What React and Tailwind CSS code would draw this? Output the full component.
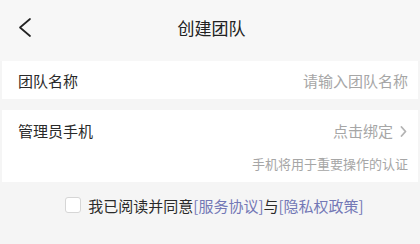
const App = () => {
    return (
        <div className="w-[420px] h-[244px] bg-[#f5f5f5] overflow-hidden" style={{ fontFamily: '"Noto Sans CJK SC", "Noto Sans", sans-serif' }}>
            <div className="relative h-[61px] flex items-center justify-center bg-[#f7f7f7] pb-[6px]">
                <svg className="absolute left-[17px] top-[17px]" width="16" height="21" viewBox="0 0 16 21" fill="none">
                    <polyline points="13,2 3,10.5 13,19" stroke="#222" strokeWidth="1.7" strokeLinecap="round" strokeLinejoin="round" />
                </svg>
                <h1 className="text-[17px] text-[#222] leading-none ml-[3px]">创建团队</h1>
            </div>

            <div className="mx-[2px] h-[38px] bg-white flex items-center justify-between pl-4 pr-[10px] pt-[2px]">
                <span className="text-[15px] text-[#2a2a2a]">团队名称</span>
                <span className="text-[15px] text-[#a6a6a6]">请输入团队名称</span>
            </div>

            <div className="mx-[2px] mt-[11px] h-[72px] bg-white pl-4 pr-[10px] flex flex-col">
                <div className="h-[42px] flex items-center justify-between">
                    <span className="text-[15px] text-[#2a2a2a]">管理员手机</span>
                    <span className="flex items-center text-[15px] text-[#a6a6a6]">
                        点击绑定
                        <svg className="ml-[7px] mr-[1px]" width="7" height="11" viewBox="0 0 7 11" fill="none">
                            <polyline points="1.5,1 5.5,5.5 1.5,10" stroke="#b3b3b3" strokeWidth="1.8" strokeLinecap="round" strokeLinejoin="round" />
                        </svg>
                    </span>
                </div>
                <div className="text-right text-[13px] text-[#a6a6a6] leading-none mt-[5px]">
                    手机将用于重要操作的认证
                </div>
            </div>

            <div className="flex items-center justify-center mt-[15px] gap-[7px] pl-[9px]">
                <span className="w-4 h-4 rounded-[3px] border border-[#d6d6d6] bg-white"></span>
                <span className="text-[15px] text-[#2a2a2a] leading-none">
                    我已阅读并同意<span className="text-[#7378b6]">[服务协议]</span>与<span className="text-[#7378b6]">[隐私权政策]</span>
                </span>
            </div>
        </div>
    );
};

export default App;
